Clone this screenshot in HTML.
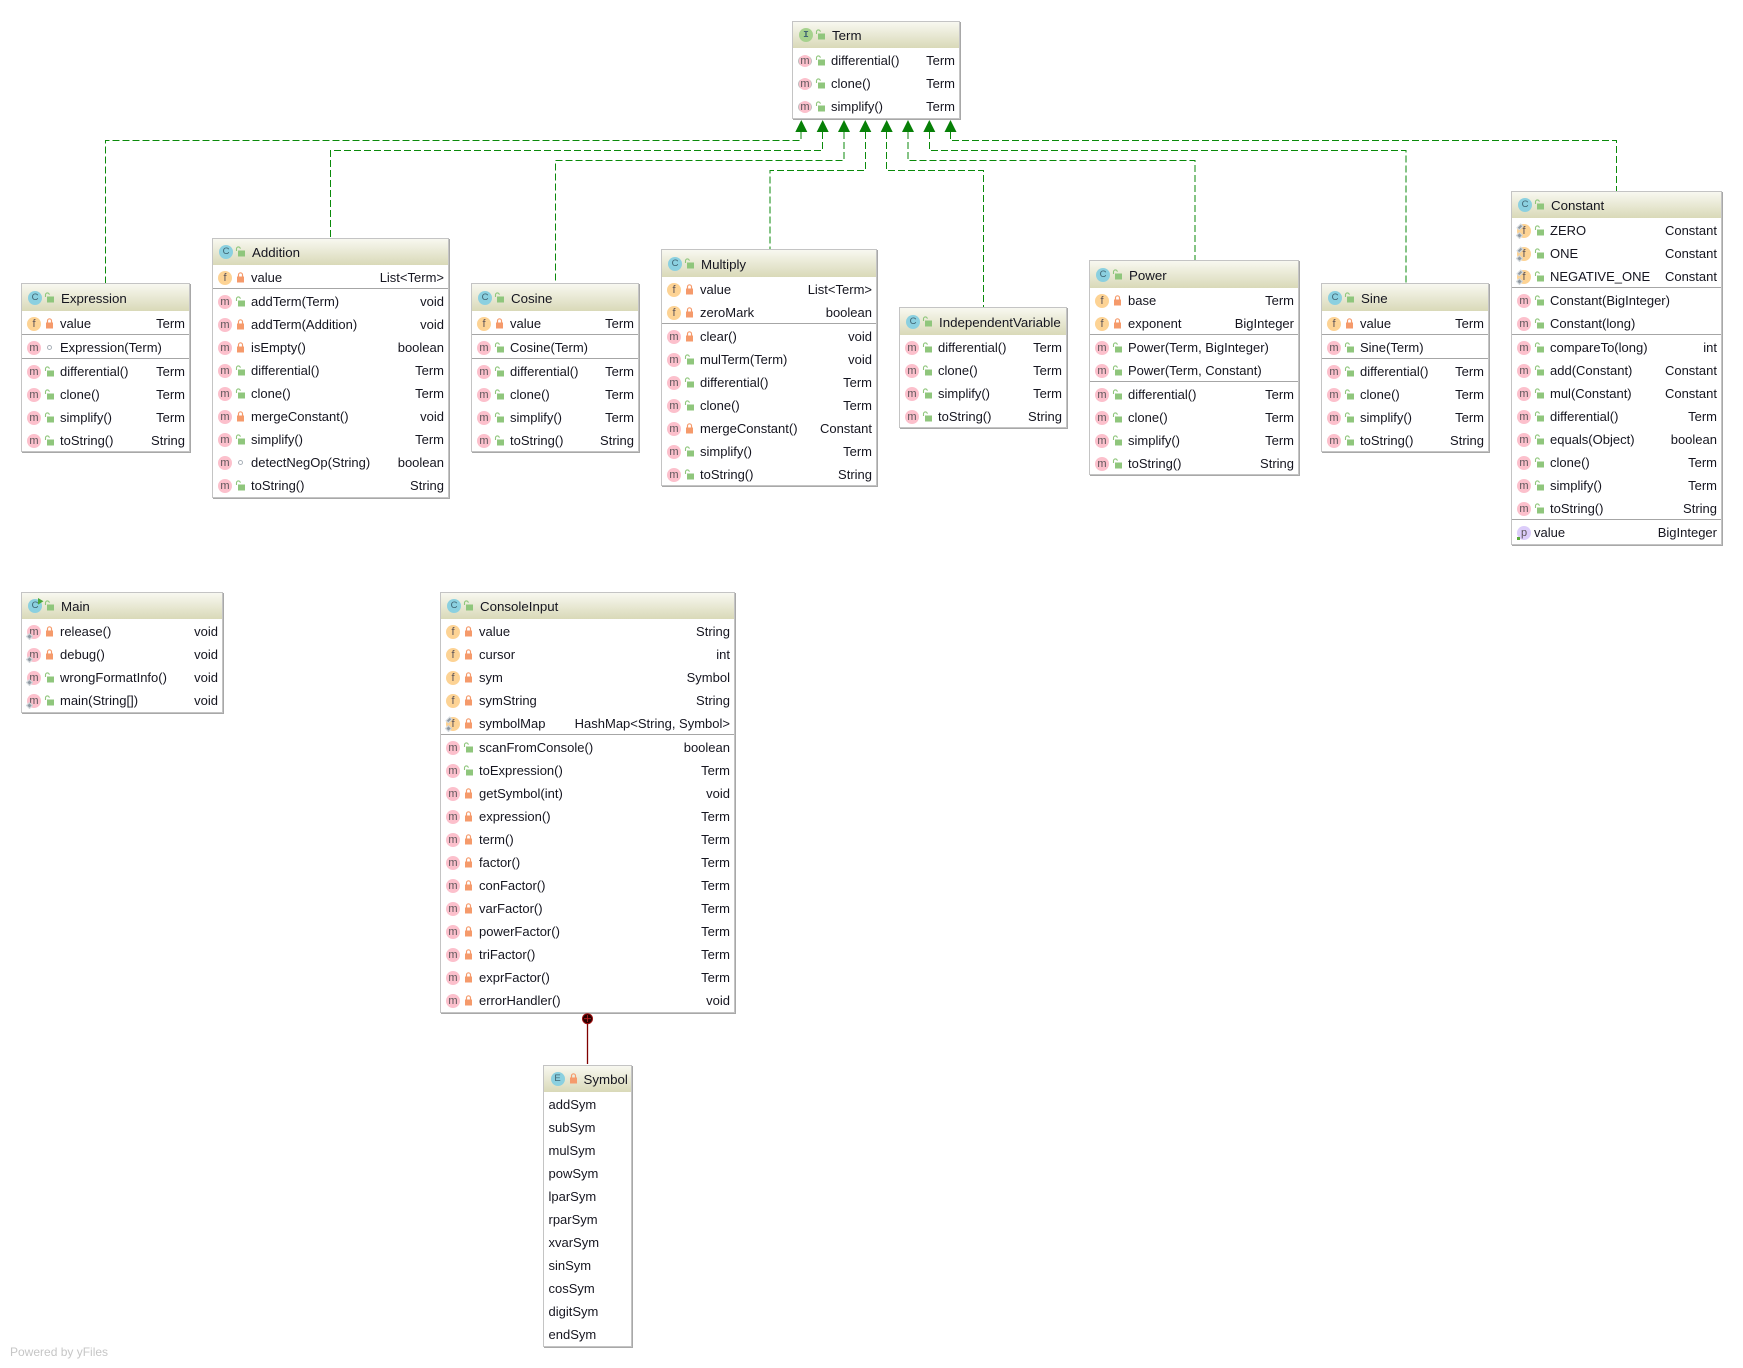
<!DOCTYPE html>
<html><head><meta charset="utf-8"><title>Diagram</title>
<style>
html,body{margin:0;padding:0;background:#fff;width:1743px;height:1368px;overflow:hidden}
body{position:relative;font:13px "Liberation Sans",sans-serif;color:#15151f}
.b{position:absolute;box-sizing:border-box;border:1px solid #c4c4c4;background:#fff;box-shadow:1px 1px 0 #a8a8a8;padding-bottom:0}
.h{position:relative;height:26px;background:linear-gradient(#f8f8f0,#d9d9b8);margin-bottom:1px;line-height:27px}
.h u{left:39px;font-size:13.3px}
.h .ic{left:6px;top:6px;width:14px;height:14px;font-size:9.5px;color:#3f6472}
.h svg{left:22px;top:7px}
.k .h{height:27px;line-height:29px}
.k .h .ic{top:7px}
.k .h svg{top:8px}
.r{position:relative;height:23px;line-height:23px}
.x{height:1px;background:#a6a6a6;position:relative;top:-1px;margin:0}
u,s{position:absolute;text-decoration:none;white-space:nowrap;top:0}
u{left:38px}
s{right:4px}
.ic{position:absolute;left:5px;top:4.5px;width:14px;height:14px;border-radius:50%;font:normal 11px/14px "Liberation Sans",sans-serif;color:#5c5458;text-align:center}
.m{background:#fcc0cc}
.f{background:#fdd394}
.c{background:#8bd0e0}
.e{background:#8bd0e0}
.p{background:#dccdfa}
.t{background:#a6d28e}
.a{width:12px;height:12px;left:6px;top:5.5px;line-height:12px;box-shadow:-2px 0 0 -1px #bbb,2px 0 0 -1px #bbb}
.st::after{content:"";position:absolute;left:0;top:9px;width:3px;height:3px;background:#8f99a3;border:1px solid #d8dde0;transform:rotate(45deg)}
.fn::before{content:"";position:absolute;left:1px;top:0;width:2px;height:4px;background:#8f99a3;border:1px solid #d8dde0;transform:rotate(45deg)}
.pd::after{content:"";position:absolute;left:0;bottom:0;width:3px;height:3px;background:#5aaa3c}
.r svg{position:absolute;left:22px;top:6px}
svg.l{width:11px;height:11px;position:absolute}
.d{position:absolute;left:25px;top:9px;width:3px;height:3px;border:1px solid #a8b0b8;border-radius:50%}
#w{position:absolute;left:0;top:0;z-index:2}
#pw{position:absolute;left:10px;top:1345px;font-size:12px;line-height:14px;color:#c6c6c6}
</style></head><body>
<svg width="0" height="0" style="position:absolute"><defs>
<symbol id="g" viewBox="0 0 11 11"><path d="M1.500 5V2.800a1.900 1.900 0 0 1 3.800 0" fill="none" stroke="#8fc67c" stroke-width="1.100"/><rect x="3" y="4.500" width="7" height="6" fill="#8fc67c"/></symbol>
<symbol id="o" viewBox="0 0 11 11"><path d="M3.500 5V2.800a2 2 0 0 1 4 0V5" fill="none" stroke="#f59a6b" stroke-width="1.200"/><rect x="2" y="4.500" width="7" height="6" fill="#f59a6b"/></symbol>
</defs></svg>

<svg id="w" width="1743" height="1368">
<g fill="none" stroke="#0b8a0b" stroke-width="1" stroke-dasharray="7 3">
<path d="M801 132V140.500H105.500V283"/>
<path d="M822.500 132V150.500H330.500V238"/>
<path d="M844 132V160.500H555.500V283"/>
<path d="M865.500 132V170.500H770V249"/>
<path d="M886.500 132V170.500H983.500V307"/>
<path d="M908 132V160.500H1195V260"/>
<path d="M929.500 132V150.500H1406V283"/>
<path d="M950.500 132V140.500H1616.500V191"/>
</g>
<g fill="#078007">
<path d="M801.300 120l6 12h-12z"/><path d="M822.700 120l6 12h-12z"/><path d="M844 120l6 12h-12z"/><path d="M865.300 120l6 12h-12z"/><path d="M886.700 120l6 12h-12z"/><path d="M908 120l6 12h-12z"/><path d="M929.300 120l6 12h-12z"/><path d="M950.500 120l6 12h-12z"/>
</g>
<path d="M587.500 1024V1064" stroke="#800000" stroke-width="1.300" fill="none"/>
<circle cx="587.500" cy="1018.700" r="5" fill="#2a0000" stroke="#a01010"/>
<path d="M584 1018.700h7M587.500 1015v7" stroke="#c02020" stroke-width=".8"/>
</svg>

<div class="b" style="left:792px;top:21px;width:168px">
<div class="h"><i class="ic t" style="font-family:'Liberation Mono',monospace;font-weight:bold">I</i><svg class="l"><use href="#g"/></svg><u>Term</u></div>
<div class="r"><i class="ic m a">m</i><svg class="l"><use href="#g"/></svg><u>differential()</u><s>Term</s></div>
<div class="r"><i class="ic m a">m</i><svg class="l"><use href="#g"/></svg><u>clone()</u><s>Term</s></div>
<div class="r"><i class="ic m a">m</i><svg class="l"><use href="#g"/></svg><u>simplify()</u><s>Term</s></div>
</div>

<div class="b k" style="left:21px;top:283px;width:169px;height:169px">
<div class="h"><i class="ic c">C</i><svg class="l"><use href="#g"/></svg><u>Expression</u></div>
<div class="r"><i class="ic f">f</i><svg class="l"><use href="#o"/></svg><u>value</u><s>Term</s></div>
<div class="x"></div>
<div class="r"><i class="ic m">m</i><i class="d"></i><u>Expression(Term)</u></div>
<div class="x"></div>
<div class="r"><i class="ic m">m</i><svg class="l"><use href="#g"/></svg><u>differential()</u><s>Term</s></div>
<div class="r"><i class="ic m">m</i><svg class="l"><use href="#g"/></svg><u>clone()</u><s>Term</s></div>
<div class="r"><i class="ic m">m</i><svg class="l"><use href="#g"/></svg><u>simplify()</u><s>Term</s></div>
<div class="r"><i class="ic m">m</i><svg class="l"><use href="#g"/></svg><u>toString()</u><s>String</s></div>
</div>

<div class="b" style="left:212px;top:238px;width:237px">
<div class="h"><i class="ic c">C</i><svg class="l"><use href="#g"/></svg><u>Addition</u></div>
<div class="r"><i class="ic f">f</i><svg class="l"><use href="#o"/></svg><u>value</u><s>List&lt;Term&gt;</s></div>
<div class="x"></div>
<div class="r"><i class="ic m">m</i><svg class="l"><use href="#g"/></svg><u>addTerm(Term)</u><s>void</s></div>
<div class="r"><i class="ic m">m</i><svg class="l"><use href="#o"/></svg><u>addTerm(Addition)</u><s>void</s></div>
<div class="r"><i class="ic m">m</i><svg class="l"><use href="#o"/></svg><u>isEmpty()</u><s>boolean</s></div>
<div class="r"><i class="ic m">m</i><svg class="l"><use href="#g"/></svg><u>differential()</u><s>Term</s></div>
<div class="r"><i class="ic m">m</i><svg class="l"><use href="#g"/></svg><u>clone()</u><s>Term</s></div>
<div class="r"><i class="ic m">m</i><svg class="l"><use href="#o"/></svg><u>mergeConstant()</u><s>void</s></div>
<div class="r"><i class="ic m">m</i><svg class="l"><use href="#g"/></svg><u>simplify()</u><s>Term</s></div>
<div class="r"><i class="ic m">m</i><i class="d"></i><u>detectNegOp(String)</u><s>boolean</s></div>
<div class="r"><i class="ic m">m</i><svg class="l"><use href="#g"/></svg><u>toString()</u><s>String</s></div>
</div>

<div class="b k" style="left:471px;top:283px;width:168px;height:169px">
<div class="h"><i class="ic c">C</i><svg class="l"><use href="#g"/></svg><u>Cosine</u></div>
<div class="r"><i class="ic f">f</i><svg class="l"><use href="#o"/></svg><u>value</u><s>Term</s></div>
<div class="x"></div>
<div class="r"><i class="ic m">m</i><svg class="l"><use href="#g"/></svg><u>Cosine(Term)</u></div>
<div class="x"></div>
<div class="r"><i class="ic m">m</i><svg class="l"><use href="#g"/></svg><u>differential()</u><s>Term</s></div>
<div class="r"><i class="ic m">m</i><svg class="l"><use href="#g"/></svg><u>clone()</u><s>Term</s></div>
<div class="r"><i class="ic m">m</i><svg class="l"><use href="#g"/></svg><u>simplify()</u><s>Term</s></div>
<div class="r"><i class="ic m">m</i><svg class="l"><use href="#g"/></svg><u>toString()</u><s>String</s></div>
</div>

<div class="b k" style="left:661px;top:249px;width:216px;height:237px">
<div class="h"><i class="ic c">C</i><svg class="l"><use href="#g"/></svg><u>Multiply</u></div>
<div class="r"><i class="ic f">f</i><svg class="l"><use href="#o"/></svg><u>value</u><s>List&lt;Term&gt;</s></div>
<div class="r"><i class="ic f">f</i><svg class="l"><use href="#o"/></svg><u>zeroMark</u><s>boolean</s></div>
<div class="x"></div>
<div class="r"><i class="ic m">m</i><svg class="l"><use href="#o"/></svg><u>clear()</u><s>void</s></div>
<div class="r"><i class="ic m">m</i><svg class="l"><use href="#g"/></svg><u>mulTerm(Term)</u><s>void</s></div>
<div class="r"><i class="ic m">m</i><svg class="l"><use href="#g"/></svg><u>differential()</u><s>Term</s></div>
<div class="r"><i class="ic m">m</i><svg class="l"><use href="#g"/></svg><u>clone()</u><s>Term</s></div>
<div class="r"><i class="ic m">m</i><svg class="l"><use href="#o"/></svg><u>mergeConstant()</u><s>Constant</s></div>
<div class="r"><i class="ic m">m</i><svg class="l"><use href="#g"/></svg><u>simplify()</u><s>Term</s></div>
<div class="r"><i class="ic m">m</i><svg class="l"><use href="#g"/></svg><u>toString()</u><s>String</s></div>
</div>

<div class="b k" style="left:899px;top:307px;width:168px;height:121px">
<div class="h"><i class="ic c">C</i><svg class="l"><use href="#g"/></svg><u>IndependentVariable</u></div>
<div class="r"><i class="ic m">m</i><svg class="l"><use href="#g"/></svg><u>differential()</u><s>Term</s></div>
<div class="r"><i class="ic m">m</i><svg class="l"><use href="#g"/></svg><u>clone()</u><s>Term</s></div>
<div class="r"><i class="ic m">m</i><svg class="l"><use href="#g"/></svg><u>simplify()</u><s>Term</s></div>
<div class="r"><i class="ic m">m</i><svg class="l"><use href="#g"/></svg><u>toString()</u><s>String</s></div>
</div>

<div class="b k" style="left:1089px;top:260px;width:210px;height:215px">
<div class="h"><i class="ic c">C</i><svg class="l"><use href="#g"/></svg><u>Power</u></div>
<div class="r"><i class="ic f">f</i><svg class="l"><use href="#o"/></svg><u>base</u><s>Term</s></div>
<div class="r"><i class="ic f">f</i><svg class="l"><use href="#o"/></svg><u>exponent</u><s>BigInteger</s></div>
<div class="x"></div>
<div class="r"><i class="ic m">m</i><svg class="l"><use href="#g"/></svg><u>Power(Term, BigInteger)</u></div>
<div class="r"><i class="ic m">m</i><svg class="l"><use href="#g"/></svg><u>Power(Term, Constant)</u></div>
<div class="x"></div>
<div class="r"><i class="ic m">m</i><svg class="l"><use href="#g"/></svg><u>differential()</u><s>Term</s></div>
<div class="r"><i class="ic m">m</i><svg class="l"><use href="#g"/></svg><u>clone()</u><s>Term</s></div>
<div class="r"><i class="ic m">m</i><svg class="l"><use href="#g"/></svg><u>simplify()</u><s>Term</s></div>
<div class="r"><i class="ic m">m</i><svg class="l"><use href="#g"/></svg><u>toString()</u><s>String</s></div>
</div>

<div class="b k" style="left:1321px;top:283px;width:168px;height:169px">
<div class="h"><i class="ic c">C</i><svg class="l"><use href="#g"/></svg><u>Sine</u></div>
<div class="r"><i class="ic f">f</i><svg class="l"><use href="#o"/></svg><u>value</u><s>Term</s></div>
<div class="x"></div>
<div class="r"><i class="ic m">m</i><svg class="l"><use href="#g"/></svg><u>Sine(Term)</u></div>
<div class="x"></div>
<div class="r"><i class="ic m">m</i><svg class="l"><use href="#g"/></svg><u>differential()</u><s>Term</s></div>
<div class="r"><i class="ic m">m</i><svg class="l"><use href="#g"/></svg><u>clone()</u><s>Term</s></div>
<div class="r"><i class="ic m">m</i><svg class="l"><use href="#g"/></svg><u>simplify()</u><s>Term</s></div>
<div class="r"><i class="ic m">m</i><svg class="l"><use href="#g"/></svg><u>toString()</u><s>String</s></div>
</div>

<div class="b" style="left:1511px;top:191px;width:211px">
<div class="h"><i class="ic c">C</i><svg class="l"><use href="#g"/></svg><u>Constant</u></div>
<div class="r"><i class="ic f st fn">f</i><svg class="l"><use href="#g"/></svg><u>ZERO</u><s>Constant</s></div>
<div class="r"><i class="ic f st fn">f</i><svg class="l"><use href="#g"/></svg><u>ONE</u><s>Constant</s></div>
<div class="r"><i class="ic f st fn">f</i><svg class="l"><use href="#g"/></svg><u>NEGATIVE_ONE</u><s>Constant</s></div>
<div class="x"></div>
<div class="r"><i class="ic m">m</i><svg class="l"><use href="#g"/></svg><u>Constant(BigInteger)</u></div>
<div class="r"><i class="ic m">m</i><svg class="l"><use href="#g"/></svg><u>Constant(long)</u></div>
<div class="x"></div>
<div class="r"><i class="ic m">m</i><svg class="l"><use href="#g"/></svg><u>compareTo(long)</u><s>int</s></div>
<div class="r"><i class="ic m">m</i><svg class="l"><use href="#g"/></svg><u>add(Constant)</u><s>Constant</s></div>
<div class="r"><i class="ic m">m</i><svg class="l"><use href="#g"/></svg><u>mul(Constant)</u><s>Constant</s></div>
<div class="r"><i class="ic m">m</i><svg class="l"><use href="#g"/></svg><u>differential()</u><s>Term</s></div>
<div class="r"><i class="ic m">m</i><svg class="l"><use href="#g"/></svg><u>equals(Object)</u><s>boolean</s></div>
<div class="r"><i class="ic m">m</i><svg class="l"><use href="#g"/></svg><u>clone()</u><s>Term</s></div>
<div class="r"><i class="ic m">m</i><svg class="l"><use href="#g"/></svg><u>simplify()</u><s>Term</s></div>
<div class="r"><i class="ic m">m</i><svg class="l"><use href="#g"/></svg><u>toString()</u><s>String</s></div>
<div class="x"></div>
<div class="r"><i class="ic p pd">p</i><u style="left:22px">value</u><s>BigInteger</s></div>
</div>

<div class="b" style="left:21px;top:592px;width:202px">
<div class="h"><i class="ic c">C</i><svg width="6" height="7" style="position:absolute;left:16px;top:5px"><path d="M0 0l5.500 3.300-5.500 3.300z" fill="#4aa83c"/></svg><svg class="l"><use href="#g"/></svg><u>Main</u></div>
<div class="r"><i class="ic m st">m</i><svg class="l"><use href="#o"/></svg><u>release()</u><s>void</s></div>
<div class="r"><i class="ic m st">m</i><svg class="l"><use href="#o"/></svg><u>debug()</u><s>void</s></div>
<div class="r"><i class="ic m st">m</i><svg class="l"><use href="#g"/></svg><u>wrongFormatInfo()</u><s>void</s></div>
<div class="r"><i class="ic m st">m</i><svg class="l"><use href="#g"/></svg><u>main(String[])</u><s>void</s></div>
</div>

<div class="b" style="left:440px;top:592px;width:295px">
<div class="h"><i class="ic c">C</i><svg class="l"><use href="#g"/></svg><u>ConsoleInput</u></div>
<div class="r"><i class="ic f">f</i><svg class="l"><use href="#o"/></svg><u>value</u><s>String</s></div>
<div class="r"><i class="ic f">f</i><svg class="l"><use href="#o"/></svg><u>cursor</u><s>int</s></div>
<div class="r"><i class="ic f">f</i><svg class="l"><use href="#o"/></svg><u>sym</u><s>Symbol</s></div>
<div class="r"><i class="ic f">f</i><svg class="l"><use href="#o"/></svg><u>symString</u><s>String</s></div>
<div class="r"><i class="ic f st fn">f</i><svg class="l"><use href="#o"/></svg><u>symbolMap</u><s>HashMap&lt;String, Symbol&gt;</s></div>
<div class="x"></div>
<div class="r"><i class="ic m">m</i><svg class="l"><use href="#g"/></svg><u>scanFromConsole()</u><s>boolean</s></div>
<div class="r"><i class="ic m">m</i><svg class="l"><use href="#g"/></svg><u>toExpression()</u><s>Term</s></div>
<div class="r"><i class="ic m">m</i><svg class="l"><use href="#o"/></svg><u>getSymbol(int)</u><s>void</s></div>
<div class="r"><i class="ic m">m</i><svg class="l"><use href="#o"/></svg><u>expression()</u><s>Term</s></div>
<div class="r"><i class="ic m">m</i><svg class="l"><use href="#o"/></svg><u>term()</u><s>Term</s></div>
<div class="r"><i class="ic m">m</i><svg class="l"><use href="#o"/></svg><u>factor()</u><s>Term</s></div>
<div class="r"><i class="ic m">m</i><svg class="l"><use href="#o"/></svg><u>conFactor()</u><s>Term</s></div>
<div class="r"><i class="ic m">m</i><svg class="l"><use href="#o"/></svg><u>varFactor()</u><s>Term</s></div>
<div class="r"><i class="ic m">m</i><svg class="l"><use href="#o"/></svg><u>powerFactor()</u><s>Term</s></div>
<div class="r"><i class="ic m">m</i><svg class="l"><use href="#o"/></svg><u>triFactor()</u><s>Term</s></div>
<div class="r"><i class="ic m">m</i><svg class="l"><use href="#o"/></svg><u>exprFactor()</u><s>Term</s></div>
<div class="r"><i class="ic m">m</i><svg class="l"><use href="#o"/></svg><u>errorHandler()</u><s>void</s></div>
</div>

<div class="b" style="left:543px;top:1065px;width:89px">
<div class="h"><i class="ic e" style="left:6.500px">E</i><svg class="l" style="left:23.500px"><use href="#o"/></svg><u style="left:39.500px">Symbol</u></div>
<div class="r"><u style="left:4.500px">addSym</u></div>
<div class="r"><u style="left:4.500px">subSym</u></div>
<div class="r"><u style="left:4.500px">mulSym</u></div>
<div class="r"><u style="left:4.500px">powSym</u></div>
<div class="r"><u style="left:4.500px">lparSym</u></div>
<div class="r"><u style="left:4.500px">rparSym</u></div>
<div class="r"><u style="left:4.500px">xvarSym</u></div>
<div class="r"><u style="left:4.500px">sinSym</u></div>
<div class="r"><u style="left:4.500px">cosSym</u></div>
<div class="r"><u style="left:4.500px">digitSym</u></div>
<div class="r"><u style="left:4.500px">endSym</u></div>
</div>

<div id="pw">Powered by yFiles</div>
</body></html>
